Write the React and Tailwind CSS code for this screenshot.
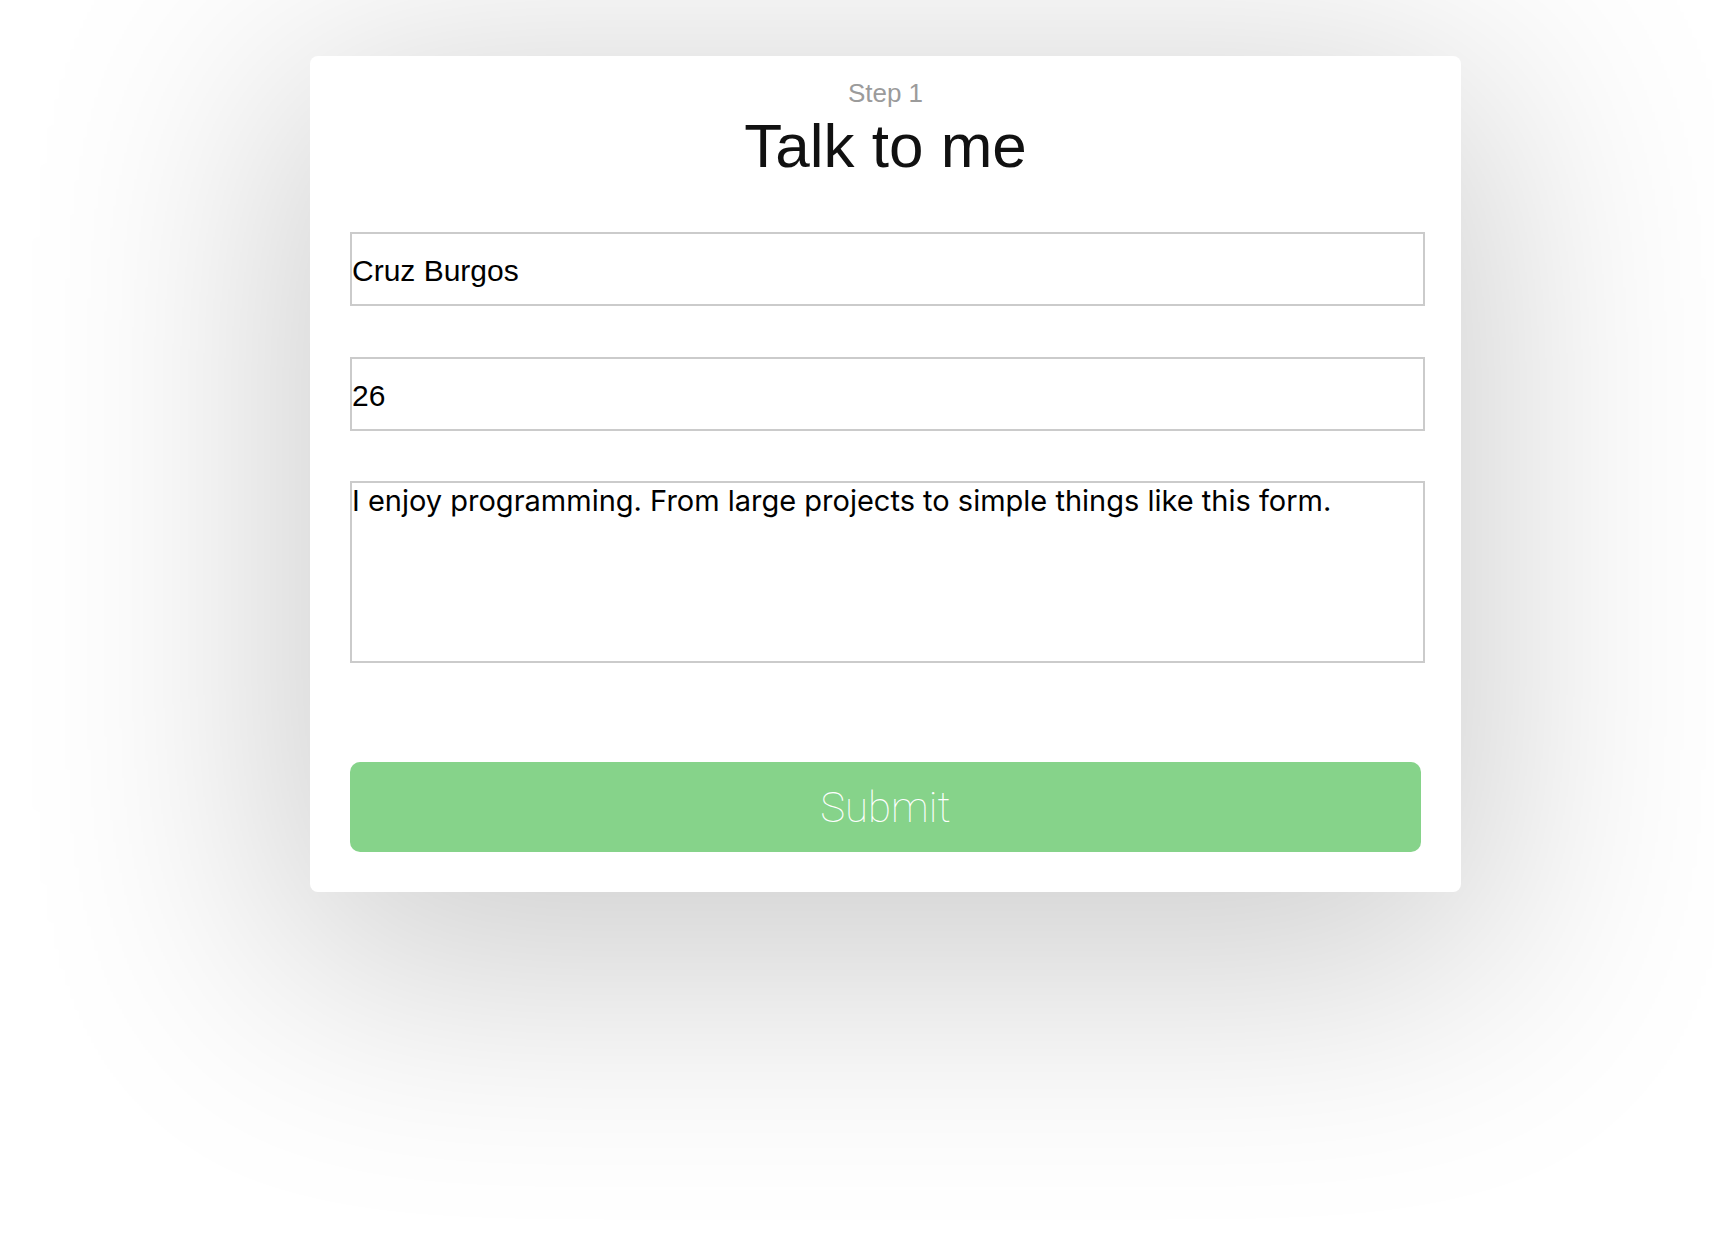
const App = () => {
  return (
    <div className="min-h-screen bg-white flex justify-center items-start pl-[57px] pt-[56px]">
      {/* Card */}
      <div className="w-[1151px] bg-white rounded-lg px-[40px] pt-[24px] pb-[40px] shadow-[0_50px_280px_30px_rgba(0,0,0,0.2)]">
        <div className="flex flex-col items-center">
          <span className="text-[26px] leading-none text-[#9b9b9b] font-['Liberation_Sans',Arial,sans-serif]">
            Step 1
          </span>
          <h1 className="mt-[9px] text-[62px] leading-none text-[#111] font-['Liberation_Sans',Arial,sans-serif]">
            Talk to me
          </h1>
        </div>

        <form className="mt-[55px] flex flex-col" onSubmit={(e) => e.preventDefault()}>
          <input
            type="text"
            defaultValue="Cruz Burgos"
            className="box-content w-full h-[67px] pt-[3px] pb-0 px-0 border-2 border-[#cbcbcb] bg-white text-[30px] text-black outline-none font-['Liberation_Sans',Arial,sans-serif]"
          />
          <input
            type="text"
            defaultValue="26"
            className="box-content w-full h-[67px] pt-[3px] pb-0 px-0 mt-[51px] border-2 border-[#cbcbcb] bg-white text-[30px] text-black outline-none font-['Liberation_Sans',Arial,sans-serif]"
          />
          <textarea
            defaultValue="I enjoy programming. From large projects to simple things like this form."
            className="box-content w-full h-[178px] p-0 mt-[50px] border-2 border-[#cbcbcb] bg-white text-[29px] leading-[36px] text-black outline-none resize-none font-['Inter',sans-serif]"
          />
          <button
            type="submit"
            className="mt-[99px] w-full h-[90px] rounded-[10px] bg-[#86d38a] text-white text-[42px] font-thin font-['Roboto',sans-serif]"
          >
            Submit
          </button>
        </form>
      </div>
    </div>
  );
};

export default App;
